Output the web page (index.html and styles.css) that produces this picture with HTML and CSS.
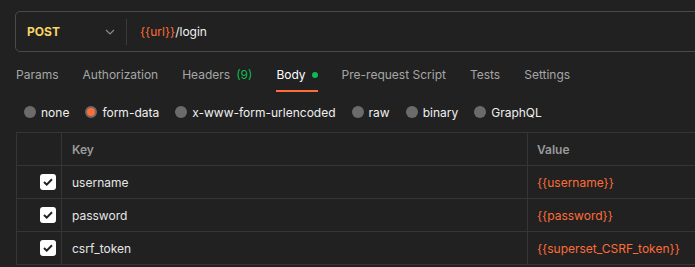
FILE: index.html
```html
<!DOCTYPE html>
<html>
<head>
<meta charset="utf-8">
<link rel="stylesheet" href="styles.css">
</head>
<body>
<div class="url-bar">
  <div class="method">
    <span class="method-name">POST</span>
    <svg class="chevron" width="10" height="6" viewBox="0 0 10 6"><path d="M1 1l4 4 4-4" fill="none" stroke="#8a8a8a" stroke-width="1.2"/></svg>
  </div>
  <div class="divider"></div>
  <div class="url"><span class="var">{{url}}</span>/login</div>
</div>

<div class="tabs">
  <div class="tab">Params</div>
  <div class="tab">Authorization</div>
  <div class="tab">Headers<span class="count">(9)</span></div>
  <div class="tab active">Body<span class="dot"></span></div>
  <div class="tab">Pre-request Script</div>
  <div class="tab">Tests</div>
  <div class="tab">Settings</div>
</div>

<div class="radios">
  <label class="radio"><span class="circle"></span>none</label>
  <label class="radio"><span class="circle selected"></span>form-data</label>
  <label class="radio"><span class="circle"></span>x-www-form-urlencoded</label>
  <label class="radio"><span class="circle"></span>raw</label>
  <label class="radio"><span class="circle"></span>binary</label>
  <label class="radio"><span class="circle"></span>GraphQL</label>
</div>

<div class="table">
  <div class="row head">
    <div class="cell check"></div>
    <div class="cell key">Key</div>
    <div class="cell value">Value</div>
  </div>
  <div class="row">
    <div class="cell check"><span class="box"><svg width="10" height="8" viewBox="0 0 10 8"><path d="M1 4l2.7 2.6L9 1.2" fill="none" stroke="#212121" stroke-width="2"/></svg></span></div>
    <div class="cell key">username</div>
    <div class="cell value var">{{username}}</div>
  </div>
  <div class="row">
    <div class="cell check"><span class="box"><svg width="10" height="8" viewBox="0 0 10 8"><path d="M1 4l2.7 2.6L9 1.2" fill="none" stroke="#212121" stroke-width="2"/></svg></span></div>
    <div class="cell key">password</div>
    <div class="cell value var">{{password}}</div>
  </div>
  <div class="row">
    <div class="cell check"><span class="box"><svg width="10" height="8" viewBox="0 0 10 8"><path d="M1 4l2.7 2.6L9 1.2" fill="none" stroke="#212121" stroke-width="2"/></svg></span></div>
    <div class="cell key">csrf_token</div>
    <div class="cell value var">{{superset_CSRF_token}}</div>
  </div>
</div>
</body>
</html>
```

FILE: styles.css
```css
html, body {
  margin: 0;
  padding: 0;
  background: #212121;
  overflow: hidden;
}
body {
  font-family: Inter, "Noto Sans", sans-serif;
  font-size: 12px;
  color: #e6e6e6;
  width: 695px;
  height: 267px;
}
.url-bar {
  display: flex;
  align-items: center;
  margin: 11px -20px 0 15px;
  height: 39px;
  border: 1px solid #4a4a4a;
  border-radius: 5px;
}
.method {
  display: flex;
  align-items: center;
  width: 110px;
  padding-left: 11px;
  box-sizing: border-box;
}
.method-name {
  color: #f7d565;
  font-weight: 700;
  width: 78px;
}
.chevron {
  display: block;
}
.divider {
  width: 1px;
  height: 26px;
  background: #3a3a3a;
}
.url {
  padding-left: 13px;
  color: #f0f0f0;
}
.var {
  color: #ff6c37;
}
.tabs {
  display: flex;
  gap: 24px;
  padding-left: 16px;
  height: 39px;
  margin-top: 1px;
}
.tab {
  display: flex;
  align-items: center;
  color: #a6a6a6;
  border-bottom: 2px solid transparent;
  box-sizing: border-box;
  padding-top: 6px;
  white-space: nowrap;
}
.tab.active {
  color: #ffffff;
  border-bottom-color: #ff6c37;
}
.count {
  color: #0cbb52;
  margin-left: 6px;
}
.dot {
  width: 6px;
  height: 6px;
  border-radius: 50%;
  background: #0cbb52;
  margin-left: 6px;
}
.radios {
  display: flex;
  align-items: center;
  gap: 16px;
  padding-left: 24px;
  height: 40px;
}
.radio {
  display: flex;
  align-items: center;
  gap: 5px;
  color: #f0f0f0;
}
.circle {
  width: 12px;
  height: 12px;
  border-radius: 50%;
  background: #6b6b6b;
  box-sizing: border-box;
}
.circle.selected {
  background: #ff6c37;
  border: 2px solid #6b6b6b;
}
.table {
  margin-left: 16px;
  margin-right: -20px;
  border-top: 1px solid #353535;
  border-left: 1px solid #353535;
}
.row {
  display: flex;
  height: 33px;
  border-bottom: 1px solid #353535;
  box-sizing: border-box;
}
.cell {
  display: flex;
  align-items: center;
  box-sizing: border-box;
}
.check {
  width: 45px;
  justify-content: flex-end;
  padding-right: 5px;
  border-right: 1px solid #353535;
}
.key {
  width: 466px;
  padding-left: 10px;
  border-right: 1px solid #353535;
}
.value {
  padding-left: 9px;
}
.head .cell {
  color: #9a9a9a;
  font-weight: 600;
}
.box {
  width: 16px;
  height: 16px;
  border-radius: 3px;
  background: #ffffff;
  display: flex;
  align-items: center;
  justify-content: center;
}
.box svg {
  display: block;
}
```
